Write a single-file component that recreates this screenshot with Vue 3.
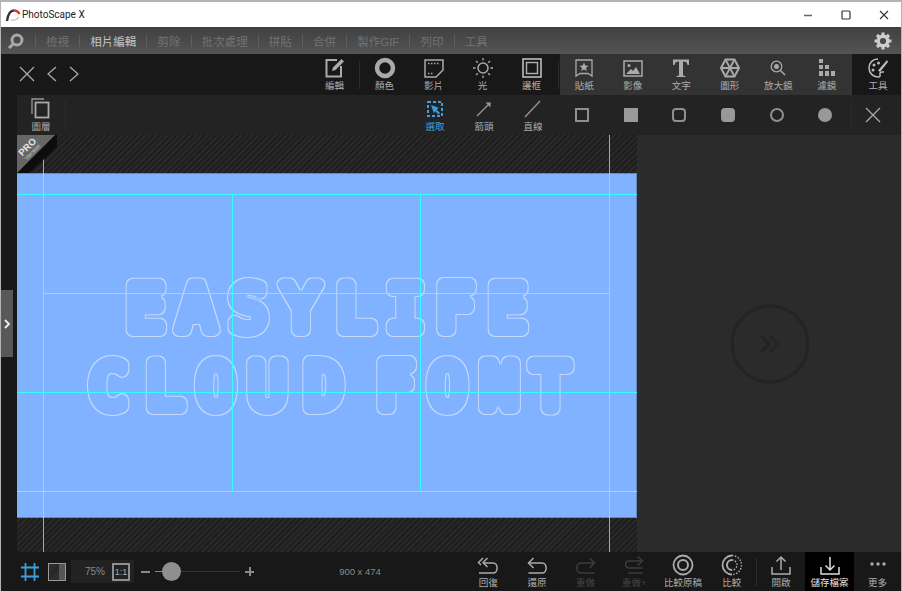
<script setup>
const menus = ['檢視', '相片編輯', '剪除', '批次處理', '拼貼', '合併', '製作GIF', '列印', '工具']
</script>

<template>
  <div class="window">
    <div class="titlebar">
      <svg class="logo" width="16" height="14" viewBox="0 0 16 14">
        <path d="M2 13 C3 6 5 2.500 9 2.500" fill="none" stroke="#333" stroke-width="2.400" />
        <path d="M8 2.500 C11 2 13 3.500 14.500 6" fill="none" stroke="#e2302c" stroke-width="2.400" />
        <path d="M6 12 C9 12.500 12 11.500 14 9" fill="none" stroke="#ccc" stroke-width="1.500" />
      </svg>
      <span class="app_name">PhotoScape X</span>
      <div class="win_btns">
        <svg width="10" height="10" viewBox="0 0 10 10"><path d="M1 5.500H9" stroke="#666" stroke-width="1.500" /></svg>
        <svg width="10" height="10" viewBox="0 0 10 10"><rect x="1" y="1" width="8" height="8" rx="1" fill="none" stroke="#333" stroke-width="1.200" /></svg>
        <svg width="10" height="10" viewBox="0 0 10 10"><path d="M1 1L9 9M9 1L1 9" stroke="#333" stroke-width="1.100" /></svg>
      </div>
    </div>

    <div class="menubar">
      <svg class="search_logo" width="18" height="18" viewBox="0 0 18 18">
        <circle cx="10" cy="8" r="5" fill="none" stroke="#a8a8a8" stroke-width="3" />
        <path d="M6 12L2 16" stroke="#a8a8a8" stroke-width="3" />
      </svg>
      <template v-for="(m, i) in menus" :key="m">
        <span class="menu_sep"></span>
        <span class="menu_item" :class="{ active: i === 1 }">{{ m }}</span>
      </template>
      <svg class="gear" width="18" height="18" viewBox="0 0 18 18">
        <circle cx="9" cy="9" r="4.800" fill="none" stroke="#ccc" stroke-width="3.400" />
        <path d="M9 0.500V3.500M9 14.500V17.500M0.500 9H3.500M14.500 9H17.500M3 3L5 5M13 13L15 15M15 3L13 5M5 13L3 15" stroke="#ccc" stroke-width="3.200" />
      </svg>
    </div>

    <div class="toolbar">
      <div class="nav_btns">
        <svg width="16" height="16" viewBox="0 0 16 16"><path d="M1 1L15 15M15 1L1 15" stroke="#aaa" stroke-width="1.300" /></svg>
        <svg width="10" height="16" viewBox="0 0 10 16"><path d="M9 1L1 8L9 15" fill="none" stroke="#aaa" stroke-width="1.300" /></svg>
        <svg width="10" height="16" viewBox="0 0 10 16"><path d="M1 1L9 8L1 15" fill="none" stroke="#aaa" stroke-width="1.300" /></svg>
      </div>
      <div class="tool_group">
        <div class="tool">
          <svg width="22" height="22" viewBox="0 0 22 22"><path d="M17 9V19.500H2.500V3H13" fill="none" stroke="#aaa" stroke-width="2" /><path d="M8 14L9 10.500L17.500 2L20 4.500L11.500 13Z" fill="#aaa" /></svg>
          <span>編輯</span>
        </div>
        <span class="tool_sep"></span>
        <div class="tool">
          <svg width="22" height="22" viewBox="0 0 22 22"><circle cx="11" cy="11" r="8" fill="none" stroke="#aaa" stroke-width="4.500" /></svg>
          <span>顏色</span>
        </div>
        <div class="tool">
          <svg width="22" height="22" viewBox="0 0 22 22"><path d="M2 3H20V13L13 20H2Z" fill="none" stroke="#aaa" stroke-width="1.500" /><path d="M5 6.500H17M5 16.500H10" stroke="#aaa" stroke-width="1.500" stroke-dasharray="1.500 1.500" /></svg>
          <span>影片</span>
        </div>
        <div class="tool">
          <svg width="22" height="22" viewBox="0 0 22 22"><circle cx="11" cy="11" r="5" fill="none" stroke="#aaa" stroke-width="1.500" /><path d="M11 1V3.500M11 18.500V21M1 11H3.500M18.500 11H21M4 4L5.800 5.800M16.200 16.200L18 18M18 4L16.200 5.800M5.800 16.200L4 18" stroke="#aaa" stroke-width="1.300" /></svg>
          <span>光</span>
        </div>
        <div class="tool">
          <svg width="22" height="22" viewBox="0 0 22 22"><rect x="2" y="2" width="18" height="18" fill="none" stroke="#aaa" stroke-width="1.800" /><rect x="5.500" y="5.500" width="11" height="11" fill="none" stroke="#aaa" stroke-width="1.500" /></svg>
          <span>邊框</span>
        </div>
        <span class="tool_sep narrow"></span>
      </div>
      <div class="tool_panel">
        <div class="tool">
          <svg width="22" height="22" viewBox="0 0 22 22"><path d="M3 3H19V19L15 16.500H7L3 19Z" fill="none" stroke="#aaa" stroke-width="1.300" /><path d="M11 5.500L12.300 8.500L15.500 8.800L13 10.900L13.800 14L11 12.400L8.200 14L9 10.900L6.500 8.800L9.700 8.500Z" fill="#aaa" /></svg>
          <span>貼紙</span>
        </div>
        <div class="tool">
          <svg width="22" height="22" viewBox="0 0 22 22"><rect x="2" y="4" width="18" height="15" fill="none" stroke="#aaa" stroke-width="1.500" /><circle cx="7" cy="8.500" r="1.500" fill="#aaa" /><path d="M4 17L9 12L11 14L14 10L18 17Z" fill="#aaa" /></svg>
          <span>影像</span>
        </div>
        <div class="tool">
          <svg width="22" height="22" viewBox="0 0 22 22"><path d="M3 2.500H19V8H17.500C17 5.500 16 4.500 13 4.500V17.500C13 18.800 14 19 15.500 19V20H6.500V19C8 19 9 18.800 9 17.500V4.500C6 4.500 5 5.500 4.500 8H3Z" fill="#aaa" /></svg>
          <span>文字</span>
        </div>
        <div class="tool">
          <svg width="22" height="22" viewBox="0 0 22 22"><path d="M6.500 2.500H15.500L20 11L15.500 19.500H6.500L2 11Z" fill="none" stroke="#aaa" stroke-width="2" /><path d="M2 11H20M6.500 2.500L15.500 19.500M15.500 2.500L6.500 19.500" stroke="#aaa" stroke-width="1.800" /></svg>
          <span>圖形</span>
        </div>
        <div class="tool">
          <svg width="22" height="22" viewBox="0 0 22 22"><circle cx="9.500" cy="9.500" r="5.300" fill="none" stroke="#aaa" stroke-width="1.300" /><circle cx="9.500" cy="9.500" r="2.500" fill="#aaa" /><path d="M13.500 13.500L18 18" stroke="#aaa" stroke-width="1.500" /></svg>
          <span>放大鏡</span>
        </div>
        <div class="tool">
          <svg width="22" height="22" viewBox="0 0 22 22" fill="#aaa"><rect x="3" y="2" width="4" height="4" /><rect x="3" y="8" width="4" height="4" /><rect x="3" y="14" width="4" height="5" /><rect x="9" y="8" width="4" height="4" /><rect x="9" y="14" width="4" height="5" /><rect x="15" y="14" width="4" height="5" /></svg>
          <span>濾鏡</span>
        </div>
      </div>
      <div class="tool tools_last">
        <svg width="22" height="22" viewBox="0 0 22 22"><path d="M11 2C5.500 2 2 6 2 11C2 16 6 20 11 20C13 20 13.500 18.800 13 17.500C12.500 16 13.500 15 15 15H17" fill="none" stroke="#bbb" stroke-width="1.500" /><path d="M20 3L11 13.500L13 15L21 5Z" fill="#bbb" /><circle cx="7" cy="8" r="1.500" fill="#bbb" /><circle cx="11.500" cy="6" r="1.500" fill="#bbb" /><circle cx="6" cy="13" r="1.500" fill="#bbb" /></svg>
        <span>工具</span>
      </div>
    </div>

    <div class="body">
      <div class="left_strip">
        <div class="expand_tab">
          <svg width="8" height="10" viewBox="0 0 8 10"><path d="M2 1L6 5L2 9" fill="none" stroke="#eee" stroke-width="1.800" /></svg>
        </div>
      </div>
      <div class="work">
        <div class="subbar">
          <div class="tool layer_tool">
            <svg width="20" height="22" viewBox="0 0 20 22"><path d="M1 16V1H13" fill="none" stroke="#999" stroke-width="1.300" /><rect x="4.500" y="4.500" width="13" height="15" fill="none" stroke="#aaa" stroke-width="1.800" /></svg>
            <span>圖層</span>
          </div>
          <span class="tool_sep tall"></span>
          <div class="sub_tools">
            <div class="tool selected">
              <svg width="22" height="22" viewBox="0 0 22 22"><rect x="4" y="4" width="14" height="14" fill="none" stroke="#3d9fe0" stroke-width="2" stroke-dasharray="3 2" /><path d="M7 7L15 10L12.500 11.500L16 15L14.500 16.500L11 13L10 15.500Z" fill="#3d9fe0" /></svg>
              <span>選取</span>
            </div>
            <div class="tool">
              <svg width="22" height="22" viewBox="0 0 22 22"><path d="M4 18L17 5" stroke="#999" stroke-width="1.200" /><path d="M12.500 4.500H17.500V9.500Z" fill="#999" /></svg>
              <span>箭頭</span>
            </div>
            <div class="tool">
              <svg width="22" height="22" viewBox="0 0 22 22"><path d="M3 19L18 3" stroke="#999" stroke-width="1.300" /></svg>
              <span>直線</span>
            </div>
          </div>
          <div class="shapes">
            <i class="shape"></i>
            <i class="shape fill"></i>
            <i class="shape round"></i>
            <i class="shape round fill"></i>
            <i class="shape circle"></i>
            <i class="shape circle fill"></i>
          </div>
          <span class="tool_sep tall"></span>
          <svg class="sub_close" width="16" height="16" viewBox="0 0 16 16"><path d="M1 1L15 15M15 1L1 15" stroke="#aaa" stroke-width="1.300" /></svg>
        </div>

        <div class="content">
          <div class="canvas_area">
            <div class="hatch"></div>
            <div class="photo">
              <svg class="cloud_text" width="620" height="345" viewBox="0 0 620 345">
                <defs>
                  <filter id="cloud_outline" x="-5%" y="-30%" width="110%" height="160%">
                    <feMorphology in="SourceAlpha" operator="erode" radius="1" result="inner" />
                    <feFlood flood-color="#c4d9fb" />
                    <feComposite in2="SourceAlpha" operator="in" result="edge" />
                    <feComposite in="edge" in2="inner" operator="out" />
                  </filter>
                </defs>
                <text x="128.5 179.5 231.5 284 338.5 388.5 438 490.500" y="157" filter="url(#cloud_outline)">EASYLIFE</text>
                <text x="91.500 148 199 250.500 307 345 378 430.500 482.500 533.500" y="235" filter="url(#cloud_outline)">CLOUD FONT</text>
              </svg>
            </div>
            <div class="hatch low"></div>
            <i class="guide_v outer_left"></i>
            <i class="guide_v outer_right"></i>
            <i class="guide_v inner" style="left: 215px"></i>
            <i class="guide_v inner" style="left: 403px"></i>
            <i class="guide_h" style="top: 59px"></i>
            <i class="guide_h faint mid" style="top: 158px"></i>
            <i class="guide_h" style="top: 257px"></i>
            <i class="guide_h faint" style="top: 356px"></i>
            <div class="pro_badge">
              <i class="pro_shadow"></i>
              <i class="pro_tri"></i>
              <span class="pro_text"><b>PRO</b><small>Version</small></span>
            </div>
          </div>
          <div class="side_panel">
            <svg width="82" height="82" viewBox="0 0 82 82">
              <circle cx="41" cy="41" r="38" fill="none" stroke="#242424" stroke-width="3" />
              <path d="M32 33L40 41L32 49M41 33L49 41L41 49" fill="none" stroke="#242424" stroke-width="3.500" />
            </svg>
          </div>
        </div>
      </div>
    </div>

    <div class="bottombar">
      <div class="zoom_tools">
        <svg width="20" height="20" viewBox="0 0 20 20"><path d="M5.500 1V19M14.500 1V19M1 5.500H19M1 14.500H19" stroke="#3d9fe0" stroke-width="1.800" /></svg>
        <div class="split_icon"><i></i></div>
        <div class="zoom_box">
          <span class="zoom_pct">75%</span>
          <span class="one_one">1:1</span>
        </div>
        <span class="zoom_minus"></span>
        <div class="slider"><i class="slider_fill"></i><i class="slider_knob"></i></div>
        <span class="zoom_plus"></span>
      </div>
      <span class="dims">900 x 474</span>
      <div class="actions">
        <div class="tool">
          <svg width="24" height="22" viewBox="0 0 24 22"><path d="M7 9H17C22.500 9 22.500 19 17 19H3" fill="none" stroke="#aaa" stroke-width="1.500" /><path d="M11.500 4L7 8.500L11.500 13M7 4L2.500 8.500L5 11" fill="none" stroke="#aaa" stroke-width="1.500" /></svg>
          <span>回復</span>
        </div>
        <div class="tool">
          <svg width="24" height="22" viewBox="0 0 24 22"><path d="M3.500 9H17C22.500 9 22.500 19 17 19H3.500" fill="none" stroke="#aaa" stroke-width="1.500" /><path d="M8.500 4L3.500 9L8.500 14" fill="none" stroke="#aaa" stroke-width="1.500" /></svg>
          <span>還原</span>
        </div>
        <div class="tool off">
          <svg width="24" height="22" viewBox="0 0 24 22"><path d="M20.500 9H7C1.500 9 1.500 19 7 19H20.500" fill="none" stroke="#3c3c3c" stroke-width="1.500" /><path d="M15.500 4L20.500 9L15.500 14" fill="none" stroke="#3c3c3c" stroke-width="1.500" /></svg>
          <span>重做</span>
        </div>
        <div class="tool off">
          <svg width="24" height="22" viewBox="0 0 24 22"><path d="M20.500 7H7C2.500 7 2.500 14 7 14H20.500M6 19H20.500" fill="none" stroke="#3c3c3c" stroke-width="1.500" /><path d="M15.500 2.500L20.500 7L15.500 11.500" fill="none" stroke="#3c3c3c" stroke-width="1.500" /></svg>
          <span>重做+</span>
        </div>
        <div class="tool">
          <svg width="24" height="22" viewBox="0 0 24 22"><circle cx="12" cy="11" r="9.500" fill="none" stroke="#aaa" stroke-width="1.800" /><circle cx="12" cy="11" r="5" fill="none" stroke="#aaa" stroke-width="2" /></svg>
          <span>比較原稿</span>
        </div>
        <div class="tool">
          <svg width="24" height="22" viewBox="0 0 24 22"><path d="M12 1.500A9.500 9.500 0 0 0 12 20.500" fill="none" stroke="#aaa" stroke-width="1.800" /><path d="M12 1.500A9.500 9.500 0 0 1 12 20.500" fill="none" stroke="#aaa" stroke-width="1.500" stroke-dasharray="1.500 1.500" /><path d="M12 6A5 5 0 0 0 12 16" fill="none" stroke="#aaa" stroke-width="2" /><path d="M12 6A5 5 0 0 1 12 16" fill="none" stroke="#aaa" stroke-width="1.500" stroke-dasharray="1.500 1.500" /></svg>
          <span>比較</span>
        </div>
        <span class="tool_sep"></span>
        <div class="tool open">
          <svg width="24" height="22" viewBox="0 0 24 22"><path d="M3 13V20H21V13" fill="none" stroke="#aaa" stroke-width="1.500" /><path d="M12 16V3M7.500 7.500L12 3L16.500 7.500" fill="none" stroke="#aaa" stroke-width="1.500" /></svg>
          <span>開啟</span>
        </div>
        <div class="tool save">
          <svg width="24" height="22" viewBox="0 0 24 22"><path d="M3 13V20H21V13" fill="none" stroke="#ddd" stroke-width="1.500" /><path d="M12 3V16M7.500 11.500L12 16L16.500 11.500" fill="none" stroke="#ddd" stroke-width="1.500" /></svg>
          <span>儲存檔案</span>
        </div>
        <div class="tool more">
          <svg width="24" height="22" viewBox="0 0 24 22" fill="#aaa"><circle cx="6" cy="10" r="1.700" /><circle cx="12" cy="10" r="1.700" /><circle cx="18" cy="10" r="1.700" /></svg>
          <span>更多</span>
        </div>
      </div>
    </div>
  </div>
</template>

<style>
html, body {
  margin: 0;
  background: #c8c8c8;
}
</style>

<style scoped>
.window {
  width: 902px;
  height: 591px;
  box-sizing: border-box;
  border: 1px solid #b4b4b4;
  border-top-width: 2px;
  border-bottom-width: 0;
  display: flex;
  flex-direction: column;
  overflow: hidden;
  font-family: "Liberation Sans", "Noto Sans CJK TC", sans-serif;
  background: #181818;
}

.titlebar {
  height: 25px;
  background: #fff;
  display: flex;
  align-items: center;
  padding-left: 4px;
  color: #222;
  font-size: 10px;
  font-family: Roboto, "Noto Sans", sans-serif;
}
.logo {
  margin-right: 1px;
}
.win_btns {
  margin-left: auto;
  display: flex;
  gap: 28px;
  padding-right: 12px;
  align-items: center;
}

.menubar {
  height: 27px;
  background: linear-gradient(#404040, #545454);
  display: flex;
  align-items: center;
  padding-left: 6px;
  font-size: 11.500px;
  color: #727272;
}
.search_logo {
  margin-right: 10px;
}
.menu_sep {
  width: 1px;
  height: 12px;
  background: #5f5f5f;
}
.menu_item {
  padding: 0 10.100px;
}
.menu_item.active {
  color: #c4c4c4;
}
.gear {
  margin-left: auto;
  margin-right: 9px;
}

.toolbar {
  height: 41px;
  background: #181818;
  display: flex;
  align-items: stretch;
}
.nav_btns {
  display: flex;
  align-items: center;
  gap: 12px;
  padding-left: 18px;
  padding-bottom: 2px;
  width: 309px;
  box-sizing: border-box;
  flex: none;
}
.tool_group {
  display: flex;
  align-items: center;
  width: 250px;
  flex: none;
}
.tool_panel {
  display: flex;
  width: 292px;
  flex: none;
  background: #333;
}
.tool {
  width: 49px;
  flex: none;
  display: flex;
  flex-direction: column;
  align-items: center;
  justify-content: center;
  gap: 1px;
  color: #adadad;
  font-size: 9.500px;
  line-height: 12px;
}
.tool_panel .tool {
  width: 48.500px;
}
.tool svg {
  display: block;
}
.tool_group .tool {
  height: 41px;
}
.tools_last {
  padding-left: 3px;
  box-sizing: border-box;
}
.tool_sep {
  flex: none;
  width: 1px;
  height: 28px;
  background: #2c2c2c;
}
.tool_sep.narrow {
  margin-left: 2px;
}
.tool_sep.tall {
  height: 30px;
}

.body {
  flex: 1;
  display: flex;
  min-height: 0;
}
.left_strip {
  width: 16px;
  background: #181818;
  display: flex;
  align-items: center;
  flex: none;
}
.expand_tab {
  width: 12px;
  height: 67px;
  background: #585858;
  display: flex;
  align-items: center;
  justify-content: center;
}
.work {
  flex: 1;
  display: flex;
  flex-direction: column;
  min-width: 0;
}
.subbar {
  height: 40px;
  background: #232323;
  display: flex;
  align-items: center;
  flex: none;
}
.layer_tool {
  width: 48px;
}
.sub_tools {
  display: flex;
  flex: none;
  margin-left: 344.500px;
}
.shapes {
  display: flex;
  align-items: center;
  width: 293.500px;
  flex: none;
}
.shape {
  width: 14px;
  height: 14px;
  box-sizing: border-box;
  margin: 0 17.350px;
  border: 2px solid #8f8f8f;
  flex: none;
}
.shape.fill {
  background: #999;
  border-color: #999;
}
.shape.round {
  border-radius: 4px;
}
.shape.circle {
  border-radius: 50%;
}
.sub_close {
  margin-left: 13px;
}

.content {
  flex: 1;
  display: flex;
  min-height: 0;
}
.canvas_area {
  position: relative;
  width: 620px;
  flex: none;
  display: flex;
  flex-direction: column;
  overflow: hidden;
  background: #222;
}
.hatch {
  height: 38px;
  flex: none;
  background: repeating-linear-gradient(135deg, #1e1e1e 0 2px, #292929 2px 4px);
}
.hatch.low {
  height: 34px;
}
.photo {
  flex: 1;
  background: #80b2ff;
  position: relative;
  box-shadow: inset -1px 0 #6388c0, inset 0 1px #6388c0, inset 0 -1px #6388c0;
}
.cloud_text {
  position: absolute;
  left: 0;
  top: 0;
}
.cloud_text text {
  font-family: "DejaVu Sans Mono", monospace;
  font-size: 62px;
  text-anchor: middle;
  fill: #fff;
  stroke: #fff;
  stroke-width: 14px;
  stroke-linejoin: round;
  stroke-linecap: round;
}
.guide_v {
  position: absolute;
  width: 1px;
  background: #66ecff;
}
.outer_left {
  left: 26px;
  top: 16px;
  bottom: 0;
  background: linear-gradient(#55c8d0 22px, #66ecff 22px, #66ecff 367px, #55c8d0 367px);
}
.outer_right {
  left: 592px;
  top: 0;
  bottom: 0;
  background: linear-gradient(#55c8d0 38px, #66ecff 38px, #66ecff 383px, #55c8d0 383px);
}
.inner {
  top: 59px;
  bottom: 61px;
  background: #3ff;
}
.guide_h {
  position: absolute;
  left: 0;
  right: 0;
  height: 1px;
  background: #3ff;
}
.guide_h.faint {
  background: #78e6ff;
}
.guide_h.mid {
  left: 26px;
  right: 28px;
}
.pro_badge {
  position: absolute;
  left: 0;
  top: 0;
  width: 40px;
  height: 38px;
}
.pro_shadow, .pro_tri {
  position: absolute;
  left: 0;
  top: 0;
  width: 40px;
  height: 38px;
}
.pro_shadow {
  background: #0d0d0d;
  clip-path: polygon(38px 0, 40px 0, 40px 12px, 12px 38px, 0 38px);
}
.pro_tri {
  background: #666;
  clip-path: polygon(0 0, 38px 0, 0 38px);
}
.pro_text {
  position: absolute;
  left: 1px;
  top: 7px;
  width: 24px;
  display: flex;
  flex-direction: column;
  align-items: center;
  transform: rotate(-45deg);
  color: #e4e4e4;
  white-space: nowrap;
}
.pro_text b {
  font-size: 9.500px;
  line-height: 8px;
}
.pro_text small {
  font-size: 6px;
  line-height: 7px;
  color: #c8c8c8;
}
.side_panel {
  flex: 1;
  background: #2b2b2b;
  display: flex;
  align-items: center;
  justify-content: center;
  padding-left: 1px;
}

.bottombar {
  height: 39px;
  background: #181818;
  display: flex;
  align-items: center;
  flex: none;
}
.zoom_tools {
  display: flex;
  align-items: center;
  padding-left: 19px;
  width: 300px;
  flex: none;
  box-sizing: border-box;
}
.split_icon {
  width: 18px;
  height: 18px;
  box-sizing: border-box;
  border: 1.500px solid #9a9a9a;
  margin-left: 8px;
  background: repeating-linear-gradient(135deg, #333 0 1px, #222 1px 2px);
  display: flex;
  justify-content: flex-end;
}
.split_icon i {
  width: 6px;
  background: #555;
}
.zoom_box {
  width: 63px;
  height: 23px;
  background: #222;
  margin-left: 5px;
  display: flex;
  align-items: center;
  justify-content: flex-end;
  gap: 7px;
  padding-right: 4px;
  box-sizing: border-box;
  font-size: 10px;
  color: #8a8a8a;
}
.one_one {
  width: 18px;
  height: 18px;
  box-sizing: border-box;
  border: 2px solid #8f8f8f;
  display: flex;
  align-items: center;
  justify-content: center;
  font-size: 9px;
  color: #aaa;
}
.zoom_minus, .zoom_plus {
  position: relative;
  width: 9px;
  height: 2px;
  background: #8a8a8a;
  margin-left: 7px;
}
.zoom_plus::after {
  content: "";
  position: absolute;
  left: 3.500px;
  top: -3.500px;
  width: 2px;
  height: 9px;
  background: #8a8a8a;
}
.slider {
  position: relative;
  width: 85px;
  height: 1px;
  margin-left: 5px;
  background: #333;
}
.slider_fill {
  position: absolute;
  left: 0;
  top: 0;
  width: 16px;
  height: 1px;
  background: #3d9fe0;
}
.slider_knob {
  position: absolute;
  left: 7px;
  top: -9px;
  width: 19px;
  height: 19px;
  border-radius: 50%;
  background: #8f8f8f;
}
.zoom_plus {
  margin-left: 5px;
}
.dims {
  width: 118px;
  text-align: center;
  font-size: 9.500px;
  color: #8a8a8a;
  flex: none;
}
.actions {
  display: flex;
  align-items: center;
  height: 39px;
  margin-left: auto;
}
.actions .tool {
  height: 39px;
  width: 48.700px;
}
.actions .tool.open {
  width: 48px;
}
.actions .tool.save {
  width: 49px;
  background: #000;
  color: #e4e4e4;
}
.actions .tool.more {
  width: 47px;
}
.actions .off {
  color: #444;
}
.selected {
  color: #3d9fe0;
}
</style>
